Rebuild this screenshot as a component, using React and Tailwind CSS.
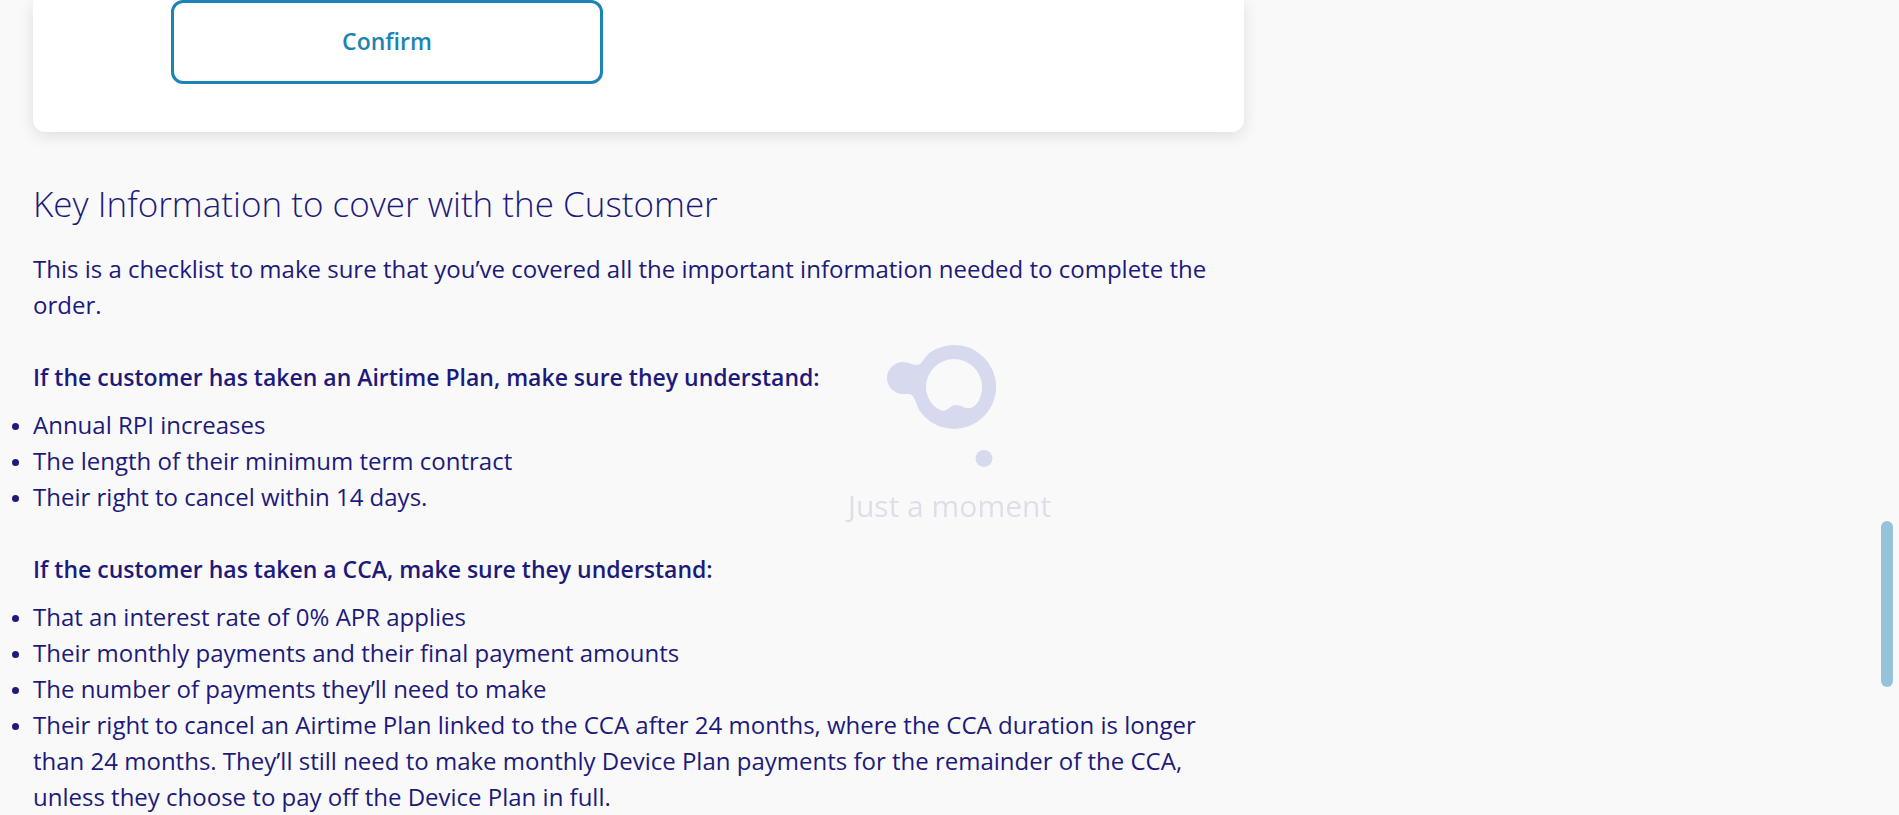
const airtimeItems = [
  'Annual RPI increases',
  'The length of their minimum term contract',
  'Their right to cancel within 14 days.',
];

const ccaItems = [
  'That an interest rate of 0% APR applies',
  'Their monthly payments and their final payment amounts',
  'The number of payments they’ll need to make',
  'Their right to cancel an Airtime Plan linked to the CCA after 24 months, where the CCA duration is longer than 24 months. They’ll still need to make monthly Device Plan payments for the remainder of the CCA, unless they choose to pay off the Device Plan in full.',
];

function Checklist({ title, items }) {
  return (
    <section className="mt-9">
      <h3 className="text-[23px] leading-9 font-semibold">{title}</h3>
      <ul className="mt-3 list-disc marker:text-[20px]">
        {items.map((item) => (
          <li key={item}>{item}</li>
        ))}
      </ul>
    </section>
  );
}

function Loader() {
  return (
    <div
      role="status"
      className="pointer-events-none fixed inset-0 flex flex-col items-center justify-center pt-[50px]"
    >
      <svg width="200" height="130" viewBox="0 0 200 130" className="fill-[#d7d9ee]" aria-hidden="true">
        <path
          fillRule="evenodd"
          d="M53 22 C59 22 62 25 67 25 C72 25 74 17 80 12.500 A42 42 0 1 1 69 70 C66 63 64 54 59 54 L53 54 A16 16 0 0 1 53 22 Z
             M104 19 A28 28 0 0 0 76 47 C76 57 82 66 90 70 C98 73 99 65 106 65 C112 65 114 69 120 68 C127 67 132 57 132 47 A28 28 0 0 0 104 19 Z"
        />
        <circle cx="134" cy="118.500" r="8.500" />
      </svg>
      <p className="mt-4 text-3xl leading-10 text-[#dedeea]">Just a moment</p>
    </div>
  );
}

export default function App() {
  return (
    <div className="h-screen overflow-hidden bg-[#f9f9f9] font-['Open_Sans','Noto_Sans',sans-serif] text-[24px] leading-9 text-[#1d1a7b]">
      <main className="ml-[33px] w-[64%] max-w-[1211px]">
        <div className="rounded-b-xl bg-white px-[138px] pb-12 shadow-[0_4px_16px_rgba(0,0,0,0.11)]">
          <button
            type="button"
            className="h-21 w-full max-w-[432px] rounded-xl border-3 border-[#1c84b5] pb-0.5 text-[23px] font-semibold text-[#1c84b5]"
          >
            Confirm
          </button>
        </div>
        <h2 className="mt-12 text-[35px] leading-12 font-light">Key Information to cover with the Customer</h2>
        <p className="mt-[23px]">
          This is a checklist to make sure that you’ve covered all the important information needed to complete the
          order.
        </p>
        <Checklist
          title="If the customer has taken an Airtime Plan, make sure they understand:"
          items={airtimeItems}
        />
        <Checklist title="If the customer has taken a CCA, make sure they understand:" items={ccaItems} />
      </main>
      <Loader />
      <div className="fixed top-[521px] right-[6px] h-[166px] w-3 rounded-full bg-[#97c3da]" />
    </div>
  );
}
